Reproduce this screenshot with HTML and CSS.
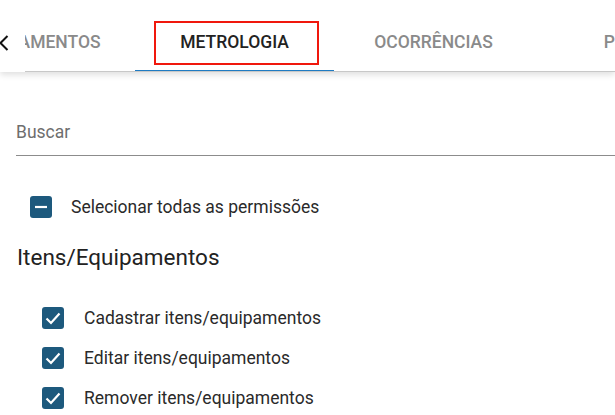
FILE: index.html
```html
<!DOCTYPE html>
<html>
<head>
  <title>Permissões</title>
  <link rel="stylesheet" href="styles.css">
</head>
<body>
  <div class="tab-bar">
    <div class="tab-prev">
      <svg width="10" height="16" viewBox="0 0 10 16"><path d="M8.5 1 L1.5 8 L8.5 15" fill="none" stroke="#111" stroke-width="2"/></svg>
    </div>
    <div class="tab-scroll">
      <div class="tab-list">
        <div class="tab">Equipamentos</div>
        <div class="tab active">
          Metrologia
          <span class="highlight"></span>
        </div>
        <div class="tab">Ocorrências</div>
        <div class="tab">Perfis</div>
      </div>
    </div>
  </div>

  <div class="content">
    <div class="search-field">
      <span class="search-label">Buscar</span>
    </div>

    <div class="check-row select-all">
      <span class="checkbox">
        <svg width="22" height="22" viewBox="0 0 22 22"><path d="M5 11 H17" stroke="#fff" stroke-width="2.2"/></svg>
      </span>
      <span class="check-label">Selecionar todas as permissões</span>
    </div>

    <h3 class="group-title">Itens/Equipamentos</h3>

    <div class="group-items">
      <div class="check-row">
        <span class="checkbox">
          <svg width="22" height="22" viewBox="0 0 22 22"><path d="M4.5 11.5 L9 16 L17.5 6.5" fill="none" stroke="#fff" stroke-width="2.2"/></svg>
        </span>
        <span class="check-label">Cadastrar itens/equipamentos</span>
      </div>
      <div class="check-row">
        <span class="checkbox">
          <svg width="22" height="22" viewBox="0 0 22 22"><path d="M4.5 11.5 L9 16 L17.5 6.5" fill="none" stroke="#fff" stroke-width="2.2"/></svg>
        </span>
        <span class="check-label">Editar itens/equipamentos</span>
      </div>
      <div class="check-row">
        <span class="checkbox">
          <svg width="22" height="22" viewBox="0 0 22 22"><path d="M4.5 11.5 L9 16 L17.5 6.5" fill="none" stroke="#fff" stroke-width="2.2"/></svg>
        </span>
        <span class="check-label">Remover itens/equipamentos</span>
      </div>
    </div>
  </div>
</body>
</html>
```

FILE: styles.css
```css
* {
  margin: 0;
  padding: 0;
  box-sizing: border-box;
}

body {
  font-family: Roboto, "Liberation Sans", sans-serif;
  background: white;
  color: #262626;
  overflow: hidden;
}

.tab-bar {
  display: flex;
  height: 72px;
  background: white;
  box-shadow: 0 3px 6px rgba(0,0,0,0.12);
  position: relative;
  z-index: 1;
}

.tab-prev {
  width: 26px;
  display: flex;
  align-items: center;
  padding-top: 14px;
  margin-left: -1px;
}

.tab-scroll {
  flex: 1;
  overflow: hidden;
  border-bottom: 1px solid #c8c8c8;
}

.tab-list {
  display: flex;
  margin-left: -89px;
  height: 71px;
}

.tab {
  flex: 0 0 199px;
  display: flex;
  align-items: center;
  justify-content: center;
  padding-top: 13px;
  font-size: 17.5px;
  font-weight: 500;
  text-transform: uppercase;
  color: #8a8a8a;
  position: relative;
}

.tab.active {
  color: #222;
  border-bottom: 2px solid #1f7bc2;
  margin-bottom: -1px;
}

.highlight {
  position: absolute;
  left: 19px;
  top: 21px;
  width: 165px;
  height: 44px;
  border: 2px solid #f0180d;
}

.content {
  padding: 0 0 0 16px;
}

.search-field {
  margin-top: 49px;
  height: 35px;
  border-bottom: 1px solid #8c8c8c;
}

.search-label {
  font-size: 17.5px;
  color: #6e6e6e;
  position: relative;
  top: 1px;
}

.check-row {
  display: flex;
  align-items: center;
  height: 40px;
}

.select-all {
  margin-top: 31px;
  padding-left: 14px;
}

.checkbox {
  width: 22px;
  height: 22px;
  border-radius: 3px;
  background: #1d597d;
  display: flex;
  flex-shrink: 0;
}

.check-label {
  font-size: 17.5px;
  color: #2a2a2a;
}

.select-all .check-label {
  margin-left: 19px;
}

.group-title {
  font-size: 22.5px;
  font-weight: 400;
  color: #222;
  margin-top: 17px;
  margin-left: 1px;
}

.group-items {
  margin-top: 28px;
  padding-left: 26px;
}

.group-items .check-label {
  margin-left: 20px;
}
```
